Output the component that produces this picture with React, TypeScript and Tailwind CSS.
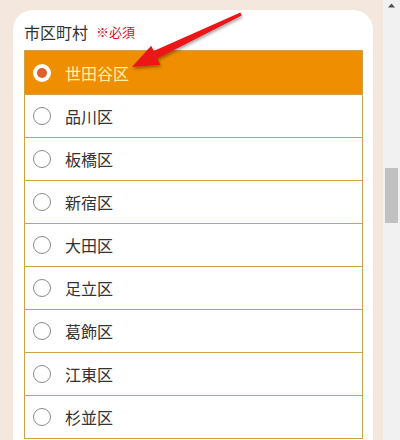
import React from "react";

const items = ["世田谷区", "品川区", "板橋区", "新宿区", "大田区", "足立区", "葛飾区", "江東区", "杉並区"];

export default function App() {
  return (
    <div
      className="relative flex h-[440px] w-[400px] overflow-hidden bg-[#f4e7de]"
      style={{ fontFamily: '"Noto Sans CJK JP", "Noto Sans", sans-serif' }}
    >
      <div className="flex-1 pl-[13px] pr-[10px] pt-[10px]">
        <div className="h-[600px] rounded-t-[20px] bg-white pl-[11px] pr-[10px] pt-[10px]">
          <div className="mb-[6px] flex h-[24px] items-center">
            <span className="text-[16px] text-[#333]">市区町村</span>
            <span className="ml-[8px] text-[13px] text-[#d0101e]">※必須</span>
          </div>
          <ul className="border-x border-t border-[#c9a24a]">
            {items.map((name, i) => {
              const sel = i === 0;
              return (
                <li
                  key={name}
                  className={`flex items-center border-b border-[#c9a24a] pl-[8px] ${
                    sel ? "h-[44px] bg-[#ef8e00]" : "h-[43px] bg-white"
                  }`}
                >
                  {sel ? (
                    <span className="flex h-[18px] w-[18px] items-center justify-center rounded-full bg-white">
                      <span className="h-[10px] w-[10px] rounded-full bg-[#df5f2a]" />
                    </span>
                  ) : (
                    <span className="h-[18px] w-[18px] rounded-full border-[1.5px] border-[#8a8a8a] bg-white" />
                  )}
                  <span className={`ml-[14px] text-[16px] ${sel ? "text-[#fff2a6]" : "text-[#333]"}`}>
                    {name}
                  </span>
                </li>
              );
            })}
          </ul>
        </div>
      </div>
      <div className="relative w-[17px] bg-[#f1f1f1]">
        <svg className="absolute left-[4px] top-[2px]" width="9" height="7" viewBox="0 0 9 7">
          <polygon points="4.5,1.5 8,5.5 1,5.5" fill="#505050" />
        </svg>
        <div className="absolute left-[2px] top-[168px] h-[55px] w-[13px] bg-[#c1c1c1]" />
      </div>
      <svg className="pointer-events-none absolute left-0 top-0" width="400" height="440">
        <defs>
          <filter id="sh" x="-20%" y="-20%" width="140%" height="140%">
            <feDropShadow dx="1" dy="2" stdDeviation="1.5" floodColor="#000" floodOpacity="0.35" />
          </filter>
        </defs>
        <g filter="url(#sh)" fill="#ec1217">
          <polygon points="157.3,58.5 153.7,51.1 240.4,12.6 241.6,15.4" />
          <polygon points="132,67 151.2,45.8 160.3,64.8" />
        </g>
      </svg>
    </div>
  );
}
